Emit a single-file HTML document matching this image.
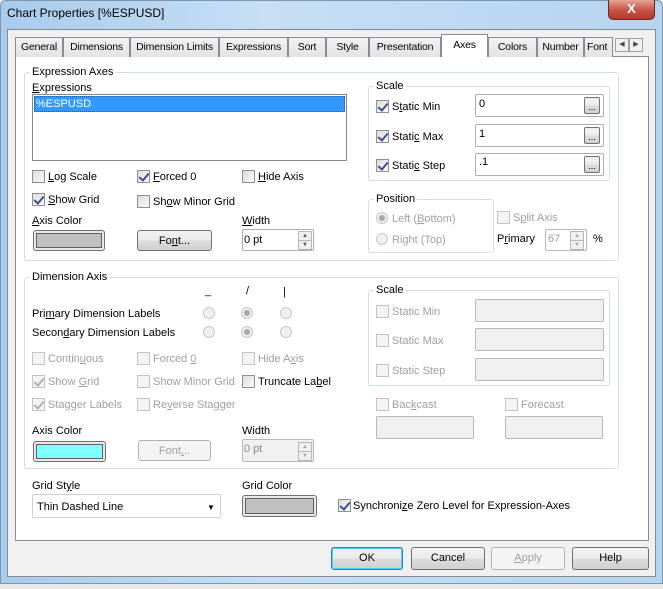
<!DOCTYPE html>
<html><head><meta charset="utf-8"><style>
*{box-sizing:border-box;margin:0;padding:0}
body{width:663px;height:589px;background:#e8e8e8;font-family:"Liberation Sans",sans-serif;font-size:11px;color:#000;position:relative;overflow:hidden}
.a{position:absolute}
.t{position:absolute;white-space:nowrap;line-height:13px;margin-top:1px}
.d{color:#a0a0a0}
.cb{position:absolute;width:13px;height:13px;border:1px solid #8f8f8f;background:linear-gradient(135deg,#dcdcdc,#fbfbfb)}
.cb.dis{border-color:#c4c4c4;background:#f4f4f4}
.cb.on::after{content:"";position:absolute;left:3px;top:0px;width:4px;height:8px;border:solid #3c4f9a;border-width:0 2px 2px 0;transform:rotate(40deg)}
.cb.dis.on::after{border-color:#b0b0b0}
.rb{position:absolute;width:12px;height:12px;border-radius:50%;border:1px solid #c8c8c8;background:#f0f0f0}
.rb.on::after{content:"";position:absolute;left:2px;top:2px;width:6px;height:6px;border-radius:50%;background:#a8a8a8}
.grp{position:absolute;border:1px solid #d5dfe5;border-radius:3px}
.gl{position:absolute;background:#fff;padding:0 2px;line-height:13px;white-space:nowrap;margin-top:1px}
.btn{position:absolute;border:1px solid #707070;border-radius:3px;background:linear-gradient(#f2f2f2 0,#ebebeb 50%,#dddddd 51%,#cfcfcf 100%);text-align:center;line-height:20px}
.btn.dis{border-color:#adb2b5;background:#f4f4f4;color:#a0a0a0}
.in{position:absolute;border:1px solid #abadb3;background:#fff;border-radius:2px}
.in.dis{background:#f0f0f0;border-color:#b8b8b8}
u{text-decoration:underline}
.tab{position:absolute;top:37px;height:20px;border:1px solid #898c95;border-bottom:none;background:linear-gradient(#f2f2f2,#e3e3e3);text-align:center;line-height:19px;font-size:10.5px;letter-spacing:-0.2px;white-space:nowrap;overflow:hidden}
.sp{position:absolute;width:14px;height:10px;border:1px solid #b8b8b8;background:#f0f0f0;font-size:6px;line-height:8px;text-align:center;color:#555}
</style></head><body>
<div class="a" style="left:0;top:0;width:663px;height:584px;background:linear-gradient(90deg,#a9cbec,#c6dff5 40%,#b7d4ef);border-radius:6px 6px 0 0;border:1px solid #7d97b3"></div>
<div class="t" style="left:7px;top:6px;font-size:12px">Chart Properties [%ESPUSD]</div>
<div class="a" style="left:608px;top:0;width:47px;height:20px;border:1px solid #6b2a25;border-top:none;border-radius:0 0 5px 5px;background:linear-gradient(#e6a497,#c9584a 50%,#b43624);color:#fff;text-align:center;font-weight:bold;font-size:13px;line-height:18px">X</div>
<div class="a" style="left:7px;top:29px;width:649px;height:548px;background:#f0f0f0;border:1px solid #838a93"></div>
<div class="a" style="left:15px;top:56px;width:634px;height:485px;background:#fff;border:1px solid #898c95"></div>
<div class="tab" style="left:15px;width:48px">General</div>
<div class="tab" style="left:63px;width:67px">Dimensions</div>
<div class="tab" style="left:130px;width:89px">Dimension Limits</div>
<div class="tab" style="left:219px;width:69px">Expressions</div>
<div class="tab" style="left:288px;width:38px">Sort</div>
<div class="tab" style="left:326px;width:43px">Style</div>
<div class="tab" style="left:369px;width:72px">Presentation</div>
<div class="tab" style="left:441px;top:34px;width:47px;height:23px;background:#fff;line-height:20px">Axes</div>
<div class="tab" style="left:488px;width:49px">Colors</div>
<div class="tab" style="left:537px;width:47px">Number</div>
<div class="tab" style="left:584px;width:29px;text-align:left;padding-left:2px">Font</div>
<div class="a" style="left:615px;top:38px;width:14px;height:14px;border:1px solid #a0a0a0;background:#f0f0f0;font-size:7px;text-align:center;line-height:12px;color:#444">◀</div>
<div class="a" style="left:629px;top:38px;width:14px;height:14px;border:1px solid #a0a0a0;background:#f0f0f0;font-size:7px;text-align:center;line-height:12px;color:#444">▶</div>

<div class="grp" style="left:24px;top:72px;width:595px;height:189px"></div>
<div class="gl" style="left:30px;top:65px">Expression Axes</div>
<div class="t" style="left:32px;top:81px"><u>E</u>xpressions</div>
<div class="a" style="left:32px;top:94px;width:315px;height:67px;border:1px solid #828790;background:#fff"></div>
<div class="a" style="left:34px;top:96px;width:311px;height:16px;background:#3399ff;border:1px dotted #1c5a9a"></div>
<div class="t" style="left:36px;top:97px;color:#fff">%ESPUSD</div>

<div class="grp" style="left:368px;top:86px;width:242px;height:95px"></div>
<div class="gl" style="left:374px;top:79px">Scale</div>
<div class="cb on" style="left:376px;top:100px"></div><div class="t" style="left:392px;top:100px">S<u>t</u>atic Min</div>
<div class="in" style="left:475px;top:94px;width:129px;height:23px"></div><div class="t" style="left:479px;top:97px">0</div>
<div class="btn" style="left:584px;top:97px;width:16px;height:17px;line-height:18px;font-size:9px;border-radius:2px">...</div>
<div class="cb on" style="left:376px;top:130px"></div><div class="t" style="left:392px;top:130px">Stati<u>c</u> Max</div>
<div class="in" style="left:475px;top:124px;width:129px;height:23px"></div><div class="t" style="left:479px;top:127px">1</div>
<div class="btn" style="left:584px;top:127px;width:16px;height:17px;line-height:18px;font-size:9px;border-radius:2px">...</div>
<div class="cb on" style="left:376px;top:159px"></div><div class="t" style="left:392px;top:159px">Stati<u>c</u> Step</div>
<div class="in" style="left:475px;top:153px;width:129px;height:23px"></div><div class="t" style="left:479px;top:155px">.1</div>
<div class="btn" style="left:584px;top:156px;width:16px;height:17px;line-height:18px;font-size:9px;border-radius:2px">...</div>

<div class="cb" style="left:32px;top:170px"></div><div class="t" style="left:48px;top:170px"><u>L</u>og Scale</div>
<div class="cb on" style="left:137px;top:170px"></div><div class="t" style="left:153px;top:170px"><u>F</u>orced 0</div>
<div class="cb" style="left:242px;top:170px"></div><div class="t" style="left:258px;top:170px"><u>H</u>ide Axis</div>
<div class="cb on" style="left:32px;top:193px"></div><div class="t" style="left:48px;top:193px"><u>S</u>how Grid</div>
<div class="cb" style="left:137px;top:195px"></div><div class="t" style="left:153px;top:195px">Sh<u>o</u>w Minor Grid</div>
<div class="t" style="left:32px;top:214px"><u>A</u>xis Color</div>
<div class="a" style="left:33px;top:230px;width:72px;height:21px;border:1px solid #707070;border-radius:3px;background:#e8e8e8;padding:2px"><div style="width:100%;height:100%;background:#c0c0c0;border:1px solid #606060"></div></div>
<div class="btn" style="left:137px;top:230px;width:75px;height:21px">Fo<u>n</u>t...</div>
<div class="t" style="left:242px;top:214px"><u>W</u>idth</div>
<div class="in" style="left:242px;top:229px;width:72px;height:22px"></div><div class="t" style="left:244px;top:233px">0 pt</div>
<div class="sp" style="left:298px;top:231px">▲</div><div class="sp" style="left:298px;top:240px">▼</div>

<div class="grp" style="left:368px;top:199px;width:126px;height:54px"></div>
<div class="gl" style="left:374px;top:192px">Position</div>
<div class="rb on" style="left:376px;top:212px"></div><div class="t d" style="left:392px;top:212px">Left (<u>B</u>ottom)</div>
<div class="rb" style="left:376px;top:233px"></div><div class="t d" style="left:392px;top:233px">Right (Top)</div>
<div class="cb dis" style="left:497px;top:211px"></div><div class="t d" style="left:513px;top:211px">S<u>p</u>lit Axis</div>
<div class="t" style="left:497px;top:232px">P<u>r</u>imary</div>
<div class="in dis" style="left:545px;top:229px;width:42px;height:22px;background:#fff"></div><div class="t d" style="left:548px;top:232px">67</div>
<div class="sp" style="left:570px;top:231px;color:#aaa">▲</div><div class="sp" style="left:570px;top:240px;color:#aaa">▼</div>
<div class="t" style="left:593px;top:232px">%</div>

<div class="grp" style="left:24px;top:277px;width:595px;height:192px"></div>
<div class="gl" style="left:30px;top:270px">Dimension Axis</div>
<div class="t" style="left:205px;top:284px">_</div>
<div class="t" style="left:246px;top:284px">/</div>
<div class="t" style="left:283px;top:285px">|</div>
<div class="t" style="left:32px;top:307px">Pri<u>m</u>ary Dimension Labels</div>
<div class="t" style="left:32px;top:326px">Secon<u>d</u>ary Dimension Labels</div>
<div class="rb" style="left:203px;top:307px"></div><div class="rb on" style="left:241px;top:307px"></div><div class="rb" style="left:280px;top:307px"></div>
<div class="rb" style="left:203px;top:326px"></div><div class="rb on" style="left:241px;top:326px"></div><div class="rb" style="left:280px;top:326px"></div>
<div class="cb dis" style="left:32px;top:352px"></div><div class="t d" style="left:48px;top:352px">Contin<u>u</u>ous</div>
<div class="cb dis" style="left:137px;top:352px"></div><div class="t d" style="left:153px;top:352px">Forced <u>0</u></div>
<div class="cb dis" style="left:242px;top:352px"></div><div class="t d" style="left:258px;top:352px">Hide A<u>x</u>is</div>
<div class="cb dis on" style="left:32px;top:375px"></div><div class="t d" style="left:48px;top:375px">Show <u>G</u>rid</div>
<div class="cb dis" style="left:137px;top:375px"></div><div class="t d" style="left:153px;top:375px">Show Minor Grid</div>
<div class="cb" style="left:242px;top:375px"></div><div class="t" style="left:258px;top:375px">Truncate La<u>b</u>el</div>
<div class="cb dis on" style="left:32px;top:398px"></div><div class="t d" style="left:48px;top:398px">Stagger Labels</div>
<div class="cb dis" style="left:137px;top:398px"></div><div class="t d" style="left:153px;top:398px">Re<u>v</u>erse Stagger</div>
<div class="t" style="left:32px;top:424px">Axis Color</div>
<div class="a" style="left:33px;top:441px;width:73px;height:21px;border:1px solid #707070;border-radius:3px;background:#e8e8e8;padding:2px"><div style="width:100%;height:100%;background:#80ffff;border:1px solid #606060"></div></div>
<div class="btn dis" style="left:138px;top:440px;width:73px;height:21px">Font<u>.</u>..</div>
<div class="t" style="left:242px;top:424px">Width</div>
<div class="in dis" style="left:242px;top:439px;width:72px;height:23px"></div><div class="t d" style="left:244px;top:442px;color:#888">0 pt</div>
<div class="sp" style="left:298px;top:442px;color:#aaa">▲</div><div class="sp" style="left:298px;top:451px;color:#aaa">▼</div>

<div class="grp" style="left:368px;top:290px;width:242px;height:96px"></div>
<div class="gl" style="left:374px;top:283px">Scale</div>
<div class="cb dis" style="left:376px;top:305px"></div><div class="t d" style="left:392px;top:305px">Static Min</div>
<div class="in dis" style="left:475px;top:299px;width:129px;height:23px"></div>
<div class="cb dis" style="left:376px;top:334px"></div><div class="t d" style="left:392px;top:334px">Static Max</div>
<div class="in dis" style="left:475px;top:328px;width:129px;height:23px"></div>
<div class="cb dis" style="left:376px;top:364px"></div><div class="t d" style="left:392px;top:364px">Static Step</div>
<div class="in dis" style="left:475px;top:358px;width:129px;height:23px"></div>
<div class="cb dis" style="left:376px;top:398px"></div><div class="t d" style="left:392px;top:398px">Bac<u>k</u>cast</div>
<div class="cb dis" style="left:505px;top:398px"></div><div class="t d" style="left:521px;top:398px">Forecast</div>
<div class="in dis" style="left:376px;top:416px;width:98px;height:23px"></div>
<div class="in dis" style="left:505px;top:416px;width:98px;height:23px"></div>

<div class="t" style="left:32px;top:479px">Grid St<u>y</u>le</div>
<div class="in" style="left:32px;top:494px;width:189px;height:24px;border-color:#d0d0d0"></div>
<div class="t" style="left:37px;top:500px">Thin Dashed Line</div>
<div class="t" style="left:207px;top:500px;font-size:8px">▼</div>
<div class="t" style="left:242px;top:479px">Grid Color</div>
<div class="a" style="left:242px;top:495px;width:75px;height:22px;border:1px solid #707070;border-radius:3px;background:#e8e8e8;padding:2px"><div style="width:100%;height:100%;background:#c0c0c0;border:1px solid #606060"></div></div>
<div class="cb on" style="left:338px;top:499px"></div><div class="t" style="left:353px;top:499px">Synchroni<u>z</u>e Zero Level for Expression-Axes</div>

<div class="btn" style="left:331px;top:547px;width:72px;height:23px;border-color:#3c7fb1;box-shadow:inset 0 0 0 1px #48d2fb">OK</div>
<div class="btn" style="left:411px;top:547px;width:74px;height:23px">Cancel</div>
<div class="btn dis" style="left:491px;top:547px;width:74px;height:23px"><u>A</u>pply</div>
<div class="btn" style="left:572px;top:547px;width:77px;height:23px">Help</div>
</body></html>
